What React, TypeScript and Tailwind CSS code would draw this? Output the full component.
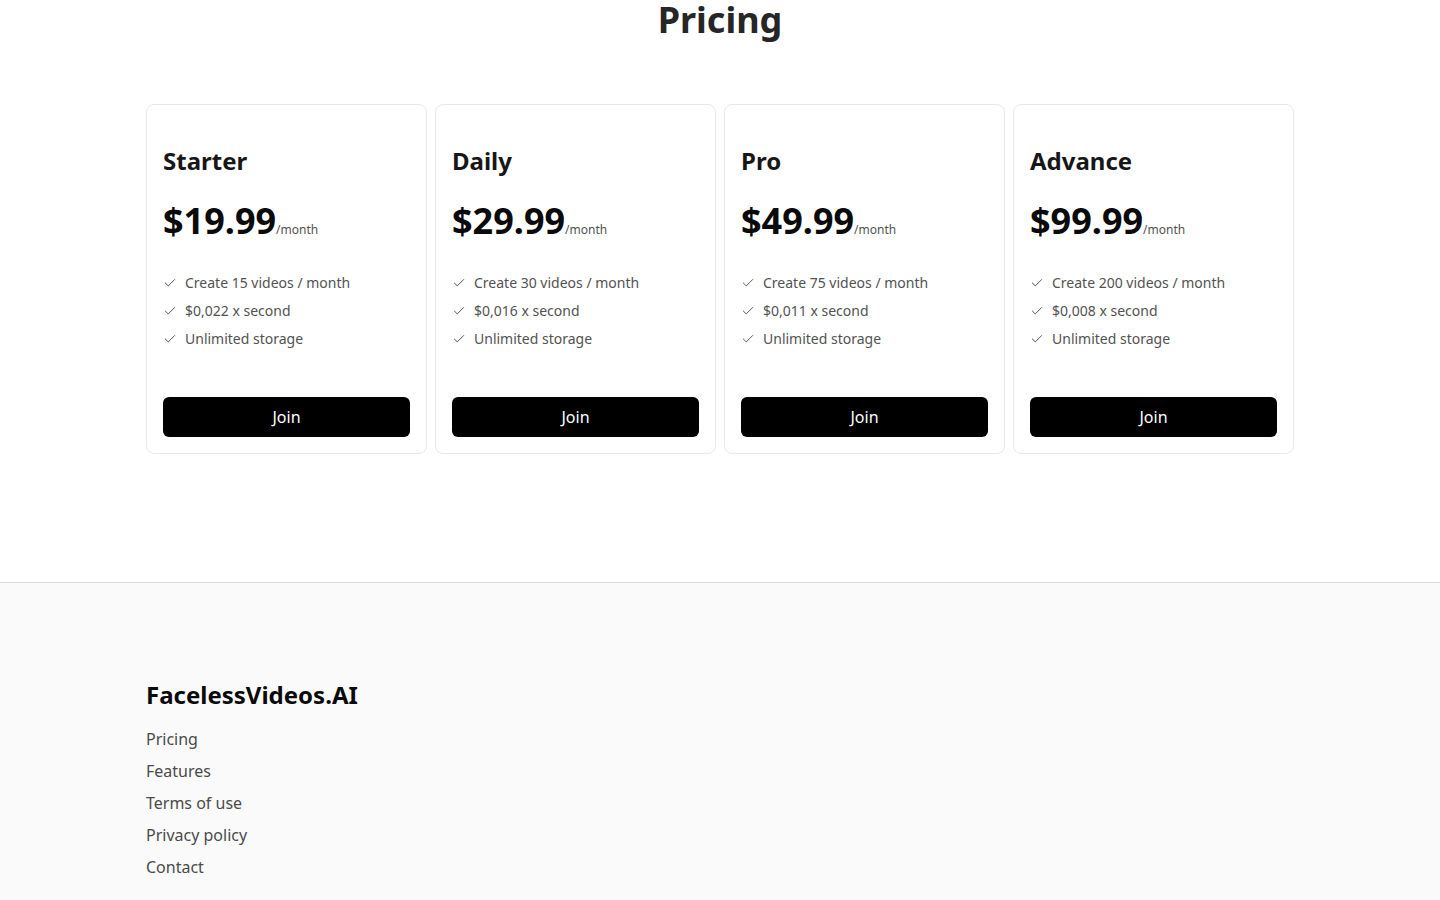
import React from "react";
import { Check } from "lucide-react";

const plans = [
  { name: "Starter", price: "$19.99", videos: "Create 15 videos / month", rate: "$0,022 x second" },
  { name: "Daily", price: "$29.99", videos: "Create 30 videos / month", rate: "$0,016 x second" },
  { name: "Pro", price: "$49.99", videos: "Create 75 videos / month", rate: "$0,011 x second" },
  { name: "Advance", price: "$99.99", videos: "Create 200 videos / month", rate: "$0,008 x second" },
];

export default function App() {
  return (
    <div className="min-h-screen bg-white text-[#0a0a0a]" style={{ fontFamily: '"Noto Sans", sans-serif' }}>
      <section className="pb-32">
        <h2 className="text-center text-4xl font-bold text-[#262626]">Pricing</h2>
        <div className="mx-auto mt-16 grid w-[1148px] grid-cols-4 gap-2">
          {plans.map((p) => (
            <div key={p.name} className="flex flex-col rounded-lg border border-[#e8e8e8] bg-white px-4 pb-4 pt-10">
              <h3 className="text-2xl font-bold text-[#171717]">{p.name}</h3>
              <div className="mt-6 flex items-baseline">
                <span className="text-4xl font-bold text-[#0a0a0a]">{p.price}</span>
                <span className="text-xs text-[#525252]">/month</span>
              </div>
              <ul className="mt-8 flex flex-col gap-2 text-sm text-[#525252]">
                {[p.videos, p.rate, "Unlimited storage"].map((f) => (
                  <li key={f} className="flex items-center gap-2">
                    <Check size={14} strokeWidth={1.5} className="text-[#404040]" />
                    <span>{f}</span>
                  </li>
                ))}
              </ul>
              <button className="mt-12 h-10 w-full rounded-md bg-black text-base text-white">Join</button>
            </div>
          ))}
        </div>
      </section>
      <footer className="border-t border-[#d9d9d9] bg-[#fafafa] pb-24 pt-24">
        <div className="mx-auto w-[1148px]">
          <div className="mb-4 text-2xl font-bold text-[#0a0a0a]">FacelessVideos.AI</div>
          <ul className="flex flex-col gap-2 text-base text-[#4a4a4a]">
            <li>Pricing</li>
            <li>Features</li>
            <li>Terms of use</li>
            <li>Privacy policy</li>
            <li>Contact</li>
          </ul>
        </div>
      </footer>
    </div>
  );
}
